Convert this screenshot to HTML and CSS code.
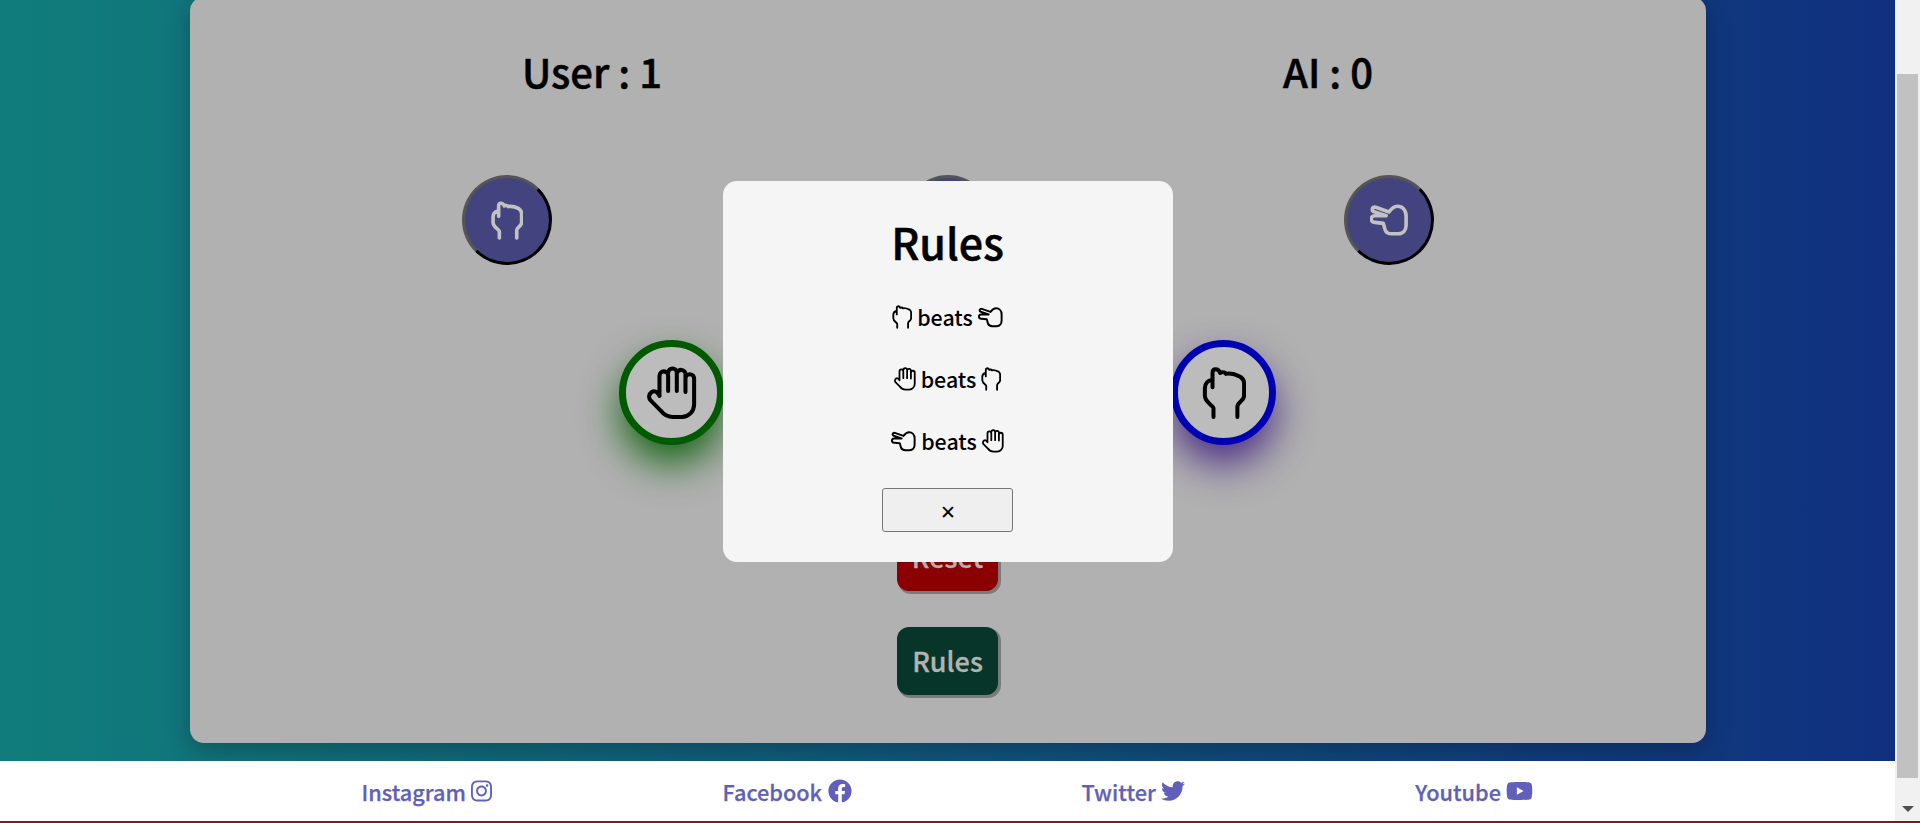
FILE: index.html
```html
<!DOCTYPE html>
<html lang="en">
<head>
<meta charset="utf-8">
<title>Rock Paper Scissors</title>
<link rel="stylesheet" href="styles.css">
</head>
<body>
<svg class="defs" width="0" height="0" aria-hidden="true">
  <symbol id="rock" viewBox="0 0 46 54">
    <path d="M12 52V43C12 40 3 37 3 30V22C3 17 6 14 11 13M11 21V6C11 1 17 1 19 6C21 5 24 5 25 7C30 6 36 8 40 10C43 12 44 14 44 17V30C44 35 37 37 37 41V52"/>
  </symbol>
  <symbol id="paper" viewBox="0 0 52 56">
    <path d="M13 31V10A4.5 4.5 0 0 1 22 10V26M22 7A4.5 4.5 0 0 1 31 7V26M31 8A4.5 4.5 0 0 1 40 9V27M40 13A4.5 4.5 0 0 1 49 13V40A13 13 0 0 1 36 53H27C21 53 17 50 14 46L4 36C1 33 2 29 5 27C8 25 11 27 13 31"/>
  </symbol>
  <symbol id="scissors" viewBox="0 0 40 34">
    <path d="M20 8L6 3C2 2 1 7 5 8L17 12H5C0 12 0 19 5 19L14 20L16 27C17 30 20 31 23 31H30C35 31 38 27 38 22V12C38 6 34 2 29 2C26 2 23 4 20 8"/>
  </symbol>
</svg>

<div class="screen">
  <div class="window">
    <div class="page">
      <main class="stage">
        <section class="card">
          <div class="scores">
            <h2 class="score">User : 1</h2>
            <h2 class="score">AI : 0</h2>
          </div>
          <div class="choices">
            <button class="choice"><svg class="ico-rock-m"><use href="#rock"/></svg></button>
            <button class="choice"><svg class="ico-paper-m"><use href="#paper"/></svg></button>
            <button class="choice"><svg class="ico-sc-m"><use href="#scissors"/></svg></button>
          </div>
          <div class="arena">
            <div class="pick pick-user"><svg class="ico-paper-l"><use href="#paper"/></svg></div>
            <div class="pick pick-ai"><svg class="ico-rock-l"><use href="#rock"/></svg></div>
          </div>
          <div class="actions">
            <button class="action action-reset">Reset</button>
            <button class="action action-rules">Rules</button>
          </div>
          <div class="overlay">
            <div class="modal">
              <h2 class="modal-title">Rules</h2>
              <p class="rule"><svg class="ico-rock-s"><use href="#rock"/></svg> beats <svg class="ico-sc-s"><use href="#scissors"/></svg></p>
              <p class="rule"><svg class="ico-paper-s"><use href="#paper"/></svg> beats <svg class="ico-rock-s"><use href="#rock"/></svg></p>
              <p class="rule"><svg class="ico-sc-s"><use href="#scissors"/></svg> beats <svg class="ico-paper-s"><use href="#paper"/></svg></p>
              <button class="close">✕</button>
            </div>
          </div>
        </section>
      </main>
      <footer class="footer">
        <a class="social" href="#">Instagram <svg class="fa fa-ig" viewBox="0 0 448 512"><path d="M224.1 141c-63.6 0-114.9 51.3-114.9 114.9s51.3 114.9 114.9 114.9S339 319.5 339 255.9 287.7 141 224.1 141zm0 189.6c-41.1 0-74.7-33.5-74.7-74.7s33.5-74.7 74.7-74.7 74.7 33.5 74.7 74.7-33.6 74.7-74.7 74.7zm146.4-194.3c0 14.9-12 26.8-26.8 26.8-14.9 0-26.8-12-26.8-26.8s12-26.8 26.8-26.8 26.8 12 26.8 26.8zm76.1 27.2c-1.7-35.9-9.9-67.7-36.2-93.9-26.2-26.2-58-34.4-93.9-36.2-37-2.1-147.9-2.1-184.9 0-35.8 1.7-67.6 9.9-93.9 36.1s-34.4 58-36.2 93.9c-2.1 37-2.1 147.9 0 184.9 1.7 35.9 9.9 67.7 36.2 93.9s58 34.4 93.9 36.2c37 2.1 147.9 2.1 184.9 0 35.9-1.7 67.7-9.9 93.9-36.2 26.2-26.2 34.4-58 36.2-93.9 2.1-37 2.1-147.8 0-184.8zM398.8 388c-7.8 19.6-22.9 34.7-42.6 42.6-29.5 11.7-99.5 9-132.1 9s-102.7 2.6-132.1-9c-19.6-7.8-34.7-22.9-42.6-42.6-11.7-29.5-9-99.5-9-132.1s-2.6-102.7 9-132.1c7.8-19.6 22.9-34.7 42.6-42.6 29.5-11.7 99.5-9 132.1-9s102.7-2.6 132.1 9c19.6 7.8 34.7 22.9 42.6 42.6 11.7 29.5 9 99.5 9 132.1s2.7 102.7-9 132.1z"/></svg></a>
        <a class="social" href="#">Facebook <svg class="fa fa-fb" viewBox="0 0 512 512"><path d="M504 256C504 119 393 8 256 8S8 119 8 256c0 123.78 90.69 226.38 209.25 245V327.69h-63V256h63v-54.64c0-62.15 37-96.48 93.67-96.48 27.14 0 55.52 4.84 55.52 4.84v61h-31.28c-30.8 0-40.41 19.12-40.41 38.73V256h68.78l-11 71.69h-57.78V501C413.31 482.38 504 379.78 504 256z"/></svg></a>
        <a class="social" href="#">Twitter <svg class="fa fa-tw" viewBox="0 0 512 512"><path d="M459.37 151.716c.325 4.548.325 9.097.325 13.645 0 138.72-105.583 298.558-298.558 298.558-59.452 0-114.68-17.219-161.137-47.106 8.447.974 16.568 1.299 25.34 1.299 49.055 0 94.213-16.568 130.274-44.832-46.132-.975-84.792-31.188-98.112-72.772 6.498.974 12.995 1.624 19.818 1.624 9.421 0 18.843-1.3 27.614-3.573-48.081-9.747-84.143-51.98-84.143-102.985v-1.299c13.969 7.797 30.214 12.67 47.431 13.319-28.264-18.843-46.781-51.005-46.781-87.391 0-19.492 5.197-37.36 14.294-52.954 51.655 63.675 129.3 105.258 216.365 109.807-1.624-7.797-2.599-15.918-2.599-24.04 0-57.828 46.782-104.934 104.934-104.934 30.213 0 57.502 12.67 76.67 33.137 23.715-4.548 46.456-13.32 66.599-25.34-7.798 24.366-24.366 44.833-46.132 57.827 21.117-2.273 41.584-8.122 60.426-16.243-14.292 20.791-32.161 39.308-52.628 54.253z"/></svg></a>
        <a class="social" href="#">Youtube <svg class="fa fa-yt" viewBox="0 0 576 512"><path d="M549.655 124.083c-6.281-23.65-24.787-42.276-48.284-48.597C458.781 64 288 64 288 64S117.22 64 74.629 75.486c-23.497 6.322-42.003 24.947-48.284 48.597-11.412 42.867-11.412 132.305-11.412 132.305s0 89.438 11.412 132.305c6.281 23.65 24.787 41.5 48.284 47.821C117.22 448 288 448 288 448s170.78 0 213.371-11.486c23.497-6.321 42.003-24.171 48.284-47.821 11.412-42.867 11.412-132.305 11.412-132.305s0-89.438-11.412-132.305zm-317.51 213.508V175.185l142.739 81.205-142.739 81.201z"/></svg></a>
      </footer>
    </div>
    <div class="scrollbar">
      <div class="thumb"></div>
      <div class="arrow"></div>
    </div>
  </div>
  <div class="rule-line"></div>
</div>
</body>
</html>
```
FILE: styles.css
```css
* { box-sizing: border-box; }
html, body { margin: 0; padding: 0; height: 100%; overflow: hidden; }
body { font-family: "Noto Sans CJK JP", "Noto Sans", sans-serif; font-weight: 500; color: #000; }
.defs { position: absolute; }
svg use { fill: none; stroke: currentColor; stroke-width: 4.2; stroke-linecap: round; stroke-linejoin: round; }

.screen { display: flex; flex-direction: column; height: 823px; width: 1920px; overflow: hidden; }
.window { display: flex; height: 821px; }
.rule-line { height: 2px; background: #7b1a25; }

.page { width: 1895px; display: flex; flex-direction: column; }
.stage { height: 761px; padding: 0 189px 0 190px; background: linear-gradient(to right, #107d7b, #10307f); overflow: hidden; }

.scrollbar { width: 25px; background: #f1f1f1; padding: 74px 2px 0; display: flex; flex-direction: column; align-items: center; }
.thumb { width: 21px; height: 704px; background: #c1c1c1; }
.arrow { margin-top: 28px; width: 0; height: 0; border-left: 6px solid transparent; border-right: 6px solid transparent; border-top: 6px solid #505050; }

.card { position: relative; height: 746px; margin-top: -3px; padding-right: 1px; background: #b1b1b1; border-radius: 14px; box-shadow: 0 8px 24px rgba(0,0,0,.25); display: flex; flex-direction: column; align-items: center; }

.scores { display: flex; justify-content: center; gap: 621px; margin-top: 39px; height: 70px; align-items: center; }
.score { margin: 0; font-size: 40px; font-weight: 500; -webkit-text-stroke: .5px #000; line-height: 70px; color: #000; }

.choices { display: flex; justify-content: center; gap: 351px; margin-top: 69px; }
.choice { width: 90px; height: 90px; border-radius: 50%; border: 3px outset #555; background: #434380; color: #c2c2c2; padding: 0; display: flex; align-items: center; justify-content: center; }
.choice use { stroke-width: 5.2; }
.choice .ico-sc-m use { stroke-width: 3.8; }

.arena { display: flex; justify-content: center; gap: 447px; margin-top: 75px; }
.pick { width: 105px; height: 105px; border-radius: 50%; background: #bcbcbc; border: 7px solid; display: flex; align-items: center; justify-content: center; color: #000; }
.pick-user { border-color: #005a00; box-shadow: 0 20px 40px -2px rgba(0,90,0,.9); }
.pick-ai { border-color: #0000b3; box-shadow: 0 20px 40px -2px rgba(60,25,125,.9); }

.actions { display: flex; flex-direction: column; gap: 36px; margin-top: 78px; }
.action { width: 101px; height: 68px; border: 0; border-radius: 12px; font: 500 27px "Noto Sans CJK JP", "Noto Sans", sans-serif; -webkit-text-stroke: .3px #b3b3b3; color: #b3b3b3; box-shadow: 2px 2px 0 1px #7b7b7b; padding: 0 0 2px; }
.action-reset { background: #8b0000; }
.action-rules { background: #08352a; }

.overlay { position: absolute; inset: 0 1px 0 0; padding-top: 3px; display: flex; align-items: center; justify-content: center; }
.modal { width: 450px; height: 381px; background: #f5f5f5; border-radius: 14px; display: flex; flex-direction: column; align-items: center; padding-top: 29px; }
.modal-title { margin: 0 0 14px; font-size: 43px; font-weight: 500; -webkit-text-stroke: .5px #000; line-height: 62px; }
.rule { margin: 0; height: 62px; font-size: 21.4px; line-height: 62px; display: flex; align-items: center; gap: 5px; }
.close { margin-top: 16px; width: 131px; height: 44px; background: #efefef; border: 1px solid #767676; border-radius: 3px; font: 500 19px "Noto Sans CJK JP", "Noto Sans", sans-serif; color: #000; padding: 0; }

.ico-rock-l { width: 44px; height: 54px; }
.ico-paper-l { width: 50px; height: 54px; }
.ico-rock-m { width: 32px; height: 39px; }
.ico-paper-m { width: 36px; height: 39px; }
.ico-sc-m { width: 38px; height: 33px; }
.ico-rock-s { width: 20px; height: 24px; }
.ico-paper-s { width: 22px; height: 24px; }
.ico-sc-s { width: 25px; height: 21px; }
.ico-sc-s use { stroke-width: 3.2; }

.footer { height: 60px; background: #fff; display: flex; justify-content: center; align-items: center; gap: 230px; }
.social { color: #6060bb; font-size: 21.7px; font-weight: 500; -webkit-text-stroke: .25px #6060bb; text-decoration: none; display: flex; align-items: center; gap: 5.5px; white-space: nowrap; }
.fa { height: 24px; fill: currentColor; }
.fa-ig { width: 21px; }
.fa-fb { width: 24px; }
.fa-tw { width: 24px; }
.fa-yt { width: 27px; }
```
